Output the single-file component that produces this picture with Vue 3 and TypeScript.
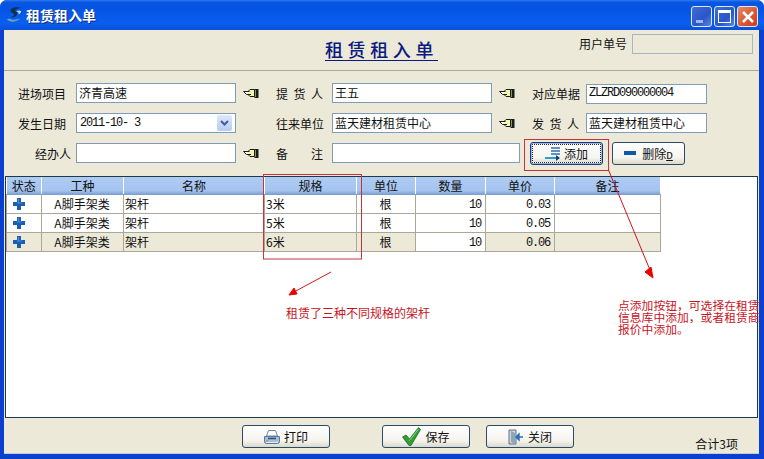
<script setup lang="ts">
interface Row {
  kind: string
  name: string
  spec: string
  unit: string
  qty: number
  price: string
  note: string
  muted?: boolean
}

const columns = [
  { title: '状态', width: 35 },
  { title: '工种', width: 82 },
  { title: '名称', width: 141 },
  { title: '规格', width: 92 },
  { title: '单位', width: 59 },
  { title: '数量', width: 70 },
  { title: '单价', width: 69 },
  { title: '备注', width: 106 }
]

const rows: Row[] = [
  { kind: 'A脚手架类', name: '架杆', spec: '3米', unit: '根', qty: 10, price: '0.03', note: '' },
  { kind: 'A脚手架类', name: '架杆', spec: '5米', unit: '根', qty: 10, price: '0.05', note: '' },
  { kind: 'A脚手架类', name: '架杆', spec: '6米', unit: '根', qty: 10, price: '0.06', note: '', muted: true }
]
</script>

<template>
  <div class="window">
    <svg class="defs" width="0" height="0">
      <symbol id="hand" viewBox="0 0 16 10">
        <path d="M.5 3.500H5L7 1.500H11.500V8.500H7L5 6.500H3.500L.5 3.500z" fill="#f2f4b0" stroke="#1a1a1a" />
        <path d="M1.500 4h4v1.500h-2z" fill="#fff" />
        <path d="M1 3.500H6.500M4 6.500H8" stroke="#1a1a1a" />
        <rect x="11.500" y="1" width="4" height="9" fill="#16201a" />
        <rect x="12" y="2" width="1" height="7" fill="#7f9a50" />
      </symbol>
    </svg>

    <header class="titlebar">
      <svg class="logo" width="15" height="16" viewBox="0 0 15 16">
        <path d="M0 12.500c3 3 9 3 13-1-3 1-8 2-10 .5-1-.5-2-.3-3 .5z" fill="#6ea6b4" />
        <path d="M5 1.500C8 0 12 0 13.500 1 11 1.200 8 2.500 7.500 4c2 0 3.500 1.500 2.500 3.500C9 10 5.500 11 3.500 10c2 0 3.500-1 3.500-2.500C7 6 3.500 6 3.500 4c0-1 .5-2 1.500-2.500z" fill="#10304e" />
        <path d="M9 4.500c1.500-1 4-1.500 5-.5.5 1-.5 2.500-2.500 3.500 .5-1.500 0-2.500-2.500-3z" fill="#bcdbe6" />
      </svg>
      <span class="titlebar-text">租赁租入单</span>
      <div class="caption-buttons">
        <span class="cap cap-blue"><i class="min-mark"></i></span>
        <span class="cap cap-blue"><i class="max-mark"></i></span>
        <span class="cap cap-red">
          <svg width="14" height="14" viewBox="0 0 14 14">
            <path d="M2 2l10 10M12 2L2 12" stroke="#fff" stroke-width="2.600" />
          </svg>
        </span>
      </div>
    </header>

    <div class="client">
      <section class="heading">
        <h1>租赁租入单</h1>
        <div class="user-no">
          <label>用户单号</label>
          <span class="readonly-box"></span>
        </div>
      </section>

      <section class="form">
        <div class="form-row">
          <label class="lbl first">进场项目</label>
          <span class="field f160">济青高速</span>
          <svg class="hand" width="16" height="10"><use href="#hand" /></svg>
          <label class="lbl second spread"><span>提</span><span>货</span><span>人</span></label>
          <span class="field f160">王五</span>
          <svg class="hand" width="16" height="10"><use href="#hand" /></svg>
          <label class="lbl third">对应单据</label>
          <span class="field f120 mono drop">ZLZRD090000004</span>
        </div>

        <div class="form-row">
          <label class="lbl first">发生日期</label>
          <span class="field f160 date mono">
            <span class="date-text">2011-10- 3</span>
            <span class="combo-btn">
              <svg width="9" height="7" viewBox="0 0 9 7"><path d="M1 1l3.500 3.500L8 1" fill="none" stroke="#3f5f9c" stroke-width="2" /></svg>
            </span>
          </span>
          <i class="hand-gap"></i>
          <label class="lbl second">往来单位</label>
          <span class="field f160">蓝天建材租赁中心</span>
          <svg class="hand" width="16" height="10"><use href="#hand" /></svg>
          <label class="lbl third spread"><span>发</span><span>货</span><span>人</span></label>
          <span class="field f120">蓝天建材租赁中心</span>
        </div>

        <div class="form-row">
          <label class="lbl first handler">经办人</label>
          <span class="field f160"></span>
          <svg class="hand" width="16" height="10"><use href="#hand" /></svg>
          <label class="lbl second spread"><span>备</span><span>注</span></label>
          <span class="field f188"></span>
          <button class="btn add-btn">
            <svg width="16" height="15" viewBox="0 0 16 15">
              <path d="M6 2h9M6 5h9M6 8h9" stroke="#2f6fb5" stroke-width="1.400" />
              <path d="M0 12h12" stroke="#2aa0c8" stroke-width="2" />
              <path d="M11 9l4 3-4 3z" fill="#14406e" />
            </svg>
            <span>添加</span>
          </button>
          <button class="btn del-btn">
            <i class="minus"></i>
            <span>删除<u class="hotkey">D</u></span>
          </button>
        </div>
      </section>

      <section class="grid-panel">
        <table class="grid">
          <colgroup>
            <col v-for="c in columns" :key="c.title" :style="{ width: c.width + 'px' }" />
          </colgroup>
          <thead>
            <tr>
              <th v-for="c in columns" :key="c.title">{{ c.title }}</th>
            </tr>
          </thead>
          <tbody>
            <tr v-for="r in rows" :key="r.spec" :class="{ muted: r.muted }">
              <td class="status">
                <svg width="12" height="12" viewBox="0 0 12 12">
                  <path d="M4 0h4v4h4v4H8v4H4V8H0V4h4z" fill="#1a5fb4" />
                  <path d="M4 4.500h5v1H4zM5 1h1v4H5z" fill="#4f8fd8" />
                </svg>
              </td>
              <td class="center">{{ r.kind }}</td>
              <td>{{ r.name }}</td>
              <td>{{ r.spec }}</td>
              <td class="center">{{ r.unit }}</td>
              <td class="right qty mono">{{ r.qty }}</td>
              <td class="right mono">{{ r.price }}</td>
              <td>{{ r.note }}</td>
            </tr>
          </tbody>
        </table>
      </section>

      <footer class="actions">
        <button class="btn foot print">
          <svg width="16" height="14" viewBox="0 0 16 14">
            <path d="M4.500 .5h7l2 5.500h-11z" fill="#fff" stroke="#6f8aa8" />
            <path d="M.5 6.500h15v5a2 2 0 0 1-2 2h-11a2 2 0 0 1-2-2z" fill="#a6c0dc" stroke="#5a7898" />
            <path d="M4 8.500h8" stroke="#2f4a68" stroke-width="1.500" />
            <path d="M2 11h2" stroke="#d86060" />
            <path d="M2 12.500h12" stroke="#e4eef8" />
          </svg>
          <span>打印</span>
        </button>
        <button class="btn foot save">
          <svg width="19" height="19" viewBox="0 0 19 19">
            <path d="M.5 10l3.500-2 3.500 4L16.500 .5 18.500 2.500 9 18.500H7z" fill="#2f9e35" stroke="#1c6a22" stroke-width=".8" />
            <path d="M7.500 13.500L16.500 2" stroke="#8edc82" fill="none" />
          </svg>
          <span>保存</span>
        </button>
        <button class="btn foot close">
          <svg width="16" height="16" viewBox="0 0 16 16">
            <path d="M1 1h7v14H1z" fill="#cfd8dc" stroke="#607080" />
            <path d="M3 2l4 2v11l-4-2z" fill="#8fa6b8" />
            <path d="M15 8H11V5L8 8l3 3V8" fill="#2a6fc0" stroke="#2a6fc0" stroke-width="1.400" />
          </svg>
          <span>关闭</span>
        </button>
        <span class="total">合计3项</span>
      </footer>
    </div>

    <!-- annotations drawn over the form -->
    <svg class="marks" width="764" height="459" viewBox="0 0 764 459">
      <rect x="263.500" y="174.500" width="98" height="84.500" fill="none" stroke="#c8323c" />
      <rect x="524.500" y="139.500" width="84" height="31" fill="none" stroke="#c8323c" />
      <path d="M608.500 170L650 270" stroke="#c8141e" fill="none" />
      <path d="M645 272l6-5 2 11z" fill="#ee0000" stroke="#ee0000" />
      <path d="M331 272L294 292" stroke="#d01818" fill="none" />
      <path d="M289 295l5-7 3 6z" fill="#ee0000" stroke="#ee0000" />
    </svg>
    <div class="note note-left">租赁了三种不同规格的架杆</div>
    <div class="note note-right">点添加按钮，可选择在租赁<br />信息库中添加，或者租赁商<br />报价中添加。</div>
  </div>
</template>

<style scoped>
.window {
  position: relative;
  width: 764px;
  height: 459px;
  display: flex;
  flex-direction: column;
  overflow: hidden;
  background: #0a3fd0;
  border-radius: 7px 7px 0 0;
  font-family: "Noto Sans CJK SC", "Liberation Sans", sans-serif;
  font-size: 12px;
  color: #111;
}
.defs {
  position: absolute;
}
.titlebar {
  height: 30px;
  flex: none;
  display: flex;
  align-items: center;
  padding: 0 6px 0 7px;
  background: linear-gradient(#2a7cf0 0, #0a56e0 8%, #0454e4 30%, #0a5ff0 75%, #0850d8 100%);
}
.logo {
  flex: none;
}
.titlebar-text {
  margin-left: 4px;
  color: #fff;
  font-size: 14px;
  line-height: 16px;
  font-weight: 700;
  text-shadow: 1px 1px 0 #0a2a80;
}
.caption-buttons {
  margin-left: auto;
  display: flex;
  gap: 2px;
  padding-top: 3px;
}
.cap {
  width: 19px;
  height: 19px;
  border: 1px solid #dfe8f8;
  border-radius: 3px;
  display: flex;
  align-items: center;
  justify-content: center;
  position: relative;
}
.cap-blue {
  background: linear-gradient(135deg, #3f6ed8, #2a55c8 60%, #5a86e4);
}
.cap-red {
  background: linear-gradient(135deg, #e88a60, #d8552f 60%, #c84020);
}
.min-mark {
  position: absolute;
  left: 4px;
  bottom: 3px;
  width: 7px;
  height: 3px;
  background: #9fb8ec;
}
.max-mark {
  width: 13px;
  height: 13px;
  box-sizing: border-box;
  border: 1px solid #fff;
  border-top-width: 3px;
}
.client {
  flex: 1;
  margin: 0 5px 5px 4px;
  background: #ece9d8;
  display: flex;
  flex-direction: column;
  min-height: 0;
}
.heading {
  height: 40px;
  flex: none;
  position: relative;
  display: flex;
  justify-content: flex-end;
  border-bottom: 1px solid #a9a99a;
}
.heading h1 {
  position: absolute;
  left: 321px;
  top: 9px;
  margin: 0;
  font-size: 18px;
  line-height: 21px;
  letter-spacing: 4.600px;
  font-weight: 500;
  color: #0a1a80;
  border-bottom: 1px solid #0a1a80;
  white-space: nowrap;
}
.user-no {
  display: flex;
  align-items: flex-start;
  gap: 5px;
  padding: 4px 6px 0 0;
}
.user-no label {
  line-height: 20px;
}
.readonly-box {
  width: 119px;
  height: 18px;
  border: 1px solid #a9b7bd;
  background: #ece9d8;
}
.form {
  height: 105px;
  flex: none;
  box-sizing: border-box;
  padding-top: 12px;
  display: flex;
  flex-direction: column;
  gap: 10px;
}
.form-row {
  height: 20px;
  display: flex;
  align-items: center;
}
.lbl {
  flex: none;
  text-align: right;
  white-space: nowrap;
}
.first {
  width: 62px;
  margin-right: 10px;
}
.handler {
  width: 67px;
  margin-right: 5px;
}
.second {
  width: 47px;
  margin: 0 9px 0 17px;
}
.third {
  width: 47px;
  margin: 0 7px 0 17px;
}
.spread {
  display: flex;
  justify-content: space-between;
}
.field {
  flex: none;
  box-sizing: border-box;
  height: 20px;
  line-height: 17px;
  padding: 0 2px;
  background: #fff;
  border: 1px solid #7f9db9;
  white-space: nowrap;
  overflow: hidden;
}
.f160 {
  width: 160px;
}
.f120 {
  width: 121px;
}
.f188 {
  width: 188px;
}
.drop {
  margin-top: 2px;
}
.mono {
  font-family: "Liberation Mono", monospace;
  font-size: 12px;
  letter-spacing: -1.200px;
}
.date {
  display: flex;
  align-items: center;
  justify-content: space-between;
  padding-left: 3px;
  padding-right: 1px;
}
.date-text {
  white-space: pre;
}
.combo-btn {
  width: 15px;
  height: 16px;
  margin-right: 2px;
  border-radius: 2px;
  background: linear-gradient(#dfe8fb, #b6cbf2);
  display: flex;
  align-items: center;
  justify-content: center;
}
.hand {
  flex: none;
  margin-left: 7px;
}
.hand-gap {
  flex: none;
  width: 23px;
}
.btn {
  flex: none;
  display: flex;
  align-items: center;
  justify-content: center;
  gap: 3px;
  padding: 0;
  font: inherit;
  font-size: 12px;
  color: #111;
  border: 1px solid #2a4a6a;
  border-radius: 3px;
  background: linear-gradient(#fff, #f5f4ee 70%, #dcd8c8);
}
.add-btn {
  width: 73px;
  height: 23px;
  margin-left: 10px;
  border-color: #1c3a74;
  box-shadow: inset 0 0 0 1px #9db8e4, inset 0 0 0 2px #fff;
  outline: 1px dotted #223;
  outline-offset: -3px;
}
.del-btn {
  width: 73px;
  height: 23px;
  margin-left: 9px;
  gap: 6px;
}
.hotkey {
  font-family: "Liberation Mono", monospace;
  font-size: 11px;
}
.minus {
  width: 12px;
  height: 4px;
  background: #0f5aa8;
}
.grid-panel {
  flex: 1;
  min-height: 0;
  background: #fff;
  border: 1px solid #1c3a4a;
  margin: 0 1px;
}
.grid {
  width: 654px;
  table-layout: fixed;
  border-collapse: collapse;
}
.grid th {
  box-sizing: border-box;
  height: 17px;
  padding: 0;
  font-weight: 400;
  font-size: 12px;
  line-height: 15px;
  background: linear-gradient(#aecbf2, #a4c4ef 80%, #7fa4d8);
  border-right: 1px solid #fff;
  border-bottom: 1px solid #7f9ec8;
}
.grid td {
  box-sizing: border-box;
  height: 19px;
  padding: 0 2px 0 1px;
  line-height: 17px;
  font-size: 12px;
  border: 1px solid #aca899;
  border-top: 0;
  white-space: nowrap;
  overflow: hidden;
}
.grid td.mono {
  padding-right: 4px;
  line-height: 15px;
  vertical-align: bottom;
}
.muted td {
  background: #ece9d8;
}
.muted .qty {
  background: #fff;
}
.status svg {
  display: block;
  margin: 0 0 0 5px;
}
.center {
  text-align: center;
}
.right {
  text-align: right;
}
.actions {
  height: 36px;
  flex: none;
  display: flex;
  align-items: center;
  padding-top: 2px;
  box-sizing: border-box;
  border-bottom: 1px solid #c3cbd8;
}
.foot {
  width: 88px;
  height: 23px;
  gap: 4px;
}
.print {
  margin-left: 238px;
}
.save {
  margin-left: 52px;
}
.close {
  margin-left: 16px;
}
.total {
  margin-left: auto;
  margin-right: 21px;
  padding-top: 13px;
}
.marks {
  position: absolute;
  left: 0;
  top: 0;
  pointer-events: none;
}
.note {
  position: absolute;
  color: #c8141e;
  font-size: 12px;
  line-height: 12px;
  white-space: nowrap;
}
.note-left {
  left: 286px;
  top: 307px;
}
.note-right {
  left: 618px;
  top: 299px;
  font-size: 11.800px;
}
</style>
